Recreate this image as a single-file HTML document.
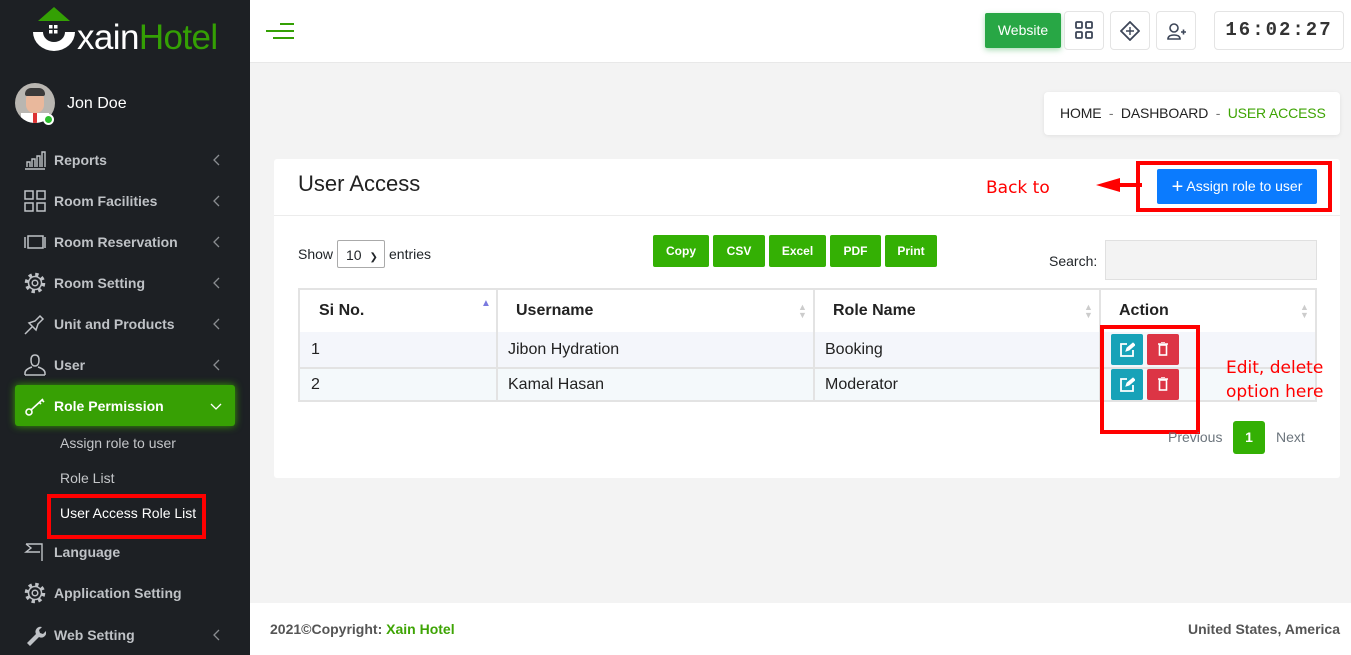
<!DOCTYPE html>
<html><head><meta charset="utf-8">
<style>
*{box-sizing:border-box;margin:0;padding:0}
body{width:1351px;height:655px;overflow:hidden;background:#f3f3f3;font-family:"Liberation Sans",Arial,sans-serif;position:relative;color:#212529}
.a{position:absolute}
#side{left:0;top:0;width:250px;height:655px;background:#1d2024}
.mi{position:absolute;left:0;width:250px;height:30px;color:#bfc2c6;font-weight:bold;font-size:14px}
.mi span{position:absolute;left:54px;top:7px}
.mi svg{position:absolute;left:24px;top:4px}
.mi .ch{position:absolute;left:212px;top:9px;width:8px;height:12px}
.sub{position:absolute;left:60px;color:#c4c6c9;font-size:14px}
.tb{position:absolute;top:11px;width:40px;height:39px;border:1px solid #e4e4e4;border-radius:4px;background:#fff}
.gb{position:absolute;top:235px;height:32px;background:#34b004;color:#fff;font-size:12px;font-weight:bold;border-radius:2px;text-align:center;line-height:32px}
.th{position:absolute;top:301px;font-weight:bold;font-size:16px;color:#222}
.td{position:absolute;font-size:16px;color:#222}
.srt{position:absolute;top:303px;font-size:9px;color:#ccc;line-height:8px}
.red{position:absolute;border:4px solid #f00}
</style></head><body>
<svg width="0" height="0" style="position:absolute"><defs>
<g id="gear" fill="none" stroke="#bfc2c6"><circle cx="11" cy="11" r="8.5" stroke-width="3.5" stroke-dasharray="3.3 3.37"/><circle cx="11" cy="11" r="6.5" stroke-width="1.5"/><circle cx="11" cy="11" r="2.8" stroke-width="1.5"/></g>
<path id="chev" d="M7 1L2 6l5 5" fill="none" stroke="#8a8d91" stroke-width="1.3"/>
</defs></svg>
<div id="side" class="a">
 <svg class="a" style="left:32px;top:7px" width="44" height="46" viewBox="0 0 44 46">
  <polygon points="22,0 6,14 38,14" fill="#34a004"/>
  <path d="M1,25 a21,19 0 0 0 42,0 l-10,0 a11,10 0 0 1 -22,0z" fill="#fff"/>
  <rect x="17" y="18" width="3.5" height="3.5" fill="#fff"/><rect x="22" y="18" width="3.5" height="3.5" fill="#fff"/><rect x="17" y="23" width="3.5" height="3.5" fill="#fff"/><rect x="22" y="23" width="3.5" height="3.5" fill="#fff"/>
 </svg>
 <div class="a" style="left:77px;top:18px;font-size:35px;color:#fff;letter-spacing:-0.6px">xain<span style="color:#34a004">Hotel</span></div>
 <div class="a" style="left:15px;top:83px;width:40px;height:40px;border-radius:50%;background:#b9b6b1;overflow:hidden">
  <div class="a" style="left:11px;top:8px;width:18px;height:22px;border-radius:8px;background:#e9b89c"></div>
  <div class="a" style="left:10px;top:5px;width:20px;height:8px;border-radius:6px 6px 2px 2px;background:#3b3a3a"></div>
  <div class="a" style="left:6px;top:30px;width:28px;height:14px;background:#fff"></div>
  <div class="a" style="left:18px;top:30px;width:4px;height:10px;background:#d33"></div>
 </div>
 <div class="a" style="left:43px;top:114px;width:11px;height:11px;border-radius:50%;background:#2dbd2d;border:2px solid #fff"></div>
 <div class="a" style="left:67px;top:95px;color:#fff;font-size:16px">Jon Doe</div>

 <div class="mi" style="top:145px"><svg width="22" height="22" viewBox="0 0 22 22" fill="none" stroke="#bfc2c6" stroke-width="1.4"><path d="M1 20h20M3 18v-5h3v5M8 18v-8h3v8M13 18v-11h3v11M18 18v-15h3v15"/></svg><span>Reports</span><svg class="ch" viewBox="0 0 8 12"><use href="#chev"/></svg></div>
 <div class="mi" style="top:186px"><svg width="22" height="22" viewBox="0 0 22 22" fill="none" stroke="#bfc2c6" stroke-width="1.5"><rect x="1" y="1" width="8" height="8"/><rect x="13" y="1" width="8" height="8"/><rect x="1" y="13" width="8" height="8"/><rect x="13" y="13" width="8" height="8"/></svg><span>Room Facilities</span><svg class="ch" viewBox="0 0 8 12"><use href="#chev"/></svg></div>
 <div class="mi" style="top:227px"><svg width="22" height="22" viewBox="0 0 22 22" fill="none" stroke="#bfc2c6" stroke-width="1.5"><rect x="4" y="5" width="15" height="12"/><path d="M1 6v11M21 6v11"/></svg><span>Room Reservation</span><svg class="ch" viewBox="0 0 8 12"><use href="#chev"/></svg></div>
 <div class="mi" style="top:268px"><svg width="22" height="22" viewBox="0 0 22 22"><use href="#gear"/></svg><span>Room Setting</span><svg class="ch" viewBox="0 0 8 12"><use href="#chev"/></svg></div>
 <div class="mi" style="top:309px"><svg width="22" height="22" viewBox="0 0 22 22" fill="none" stroke="#bfc2c6" stroke-width="1.5"><path d="M1 21l7-7M5 10l7 7 2-6 5-5-3-3-5 5z"/></svg><span>Unit and Products</span><svg class="ch" viewBox="0 0 8 12"><use href="#chev"/></svg></div>
 <div class="mi" style="top:350px"><svg width="22" height="22" viewBox="0 0 22 22" fill="none" stroke="#bfc2c6" stroke-width="1.5"><path d="M11 1c-3 0-4 2-4 5s1 6 4 6 4-3 4-6-1-5-4-5zM1 21v-2c0-3 4-5 7-6M21 21v-2c0-3-4-5-7-6M1 21h20"/></svg><span>User</span><svg class="ch" viewBox="0 0 8 12"><use href="#chev"/></svg></div>
 <div class="a" style="left:15px;top:385px;width:220px;height:41px;background:#37a004;border-radius:3px;box-shadow:0 0 8px #37a004"></div>
 <div class="mi" style="top:391px;color:#fff"><svg width="22" height="22" viewBox="0 0 22 22" fill="none" stroke="#fff" stroke-width="1.6"><circle cx="5" cy="17" r="3"/><path d="M7 15l12-11M15 7l2 2M18 5l2 2"/></svg><span>Role Permission</span><svg class="ch" style="left:210px;top:12px;width:12px;height:8px" viewBox="0 0 12 8"><path d="M1 1l5 5 5-5" fill="none" stroke="#fff" stroke-width="1.3"/></svg></div>
 <div class="sub" style="top:435px">Assign role to user</div>
 <div class="sub" style="top:470px">Role List</div>
 <div class="sub" style="top:505px;color:#fff">User Access Role List</div>
 <div class="red" style="left:47px;top:494px;width:159px;height:45px"></div>
 <div class="mi" style="top:537px"><svg width="22" height="22" viewBox="0 0 22 22" fill="none" stroke="#bfc2c6" stroke-width="1.4"><path d="M2 3h16v17M2 3l5 4-5 4h14"/></svg><span>Language</span></div>
 <div class="mi" style="top:578px"><svg width="22" height="22" viewBox="0 0 22 22"><use href="#gear"/></svg><span>Application Setting</span></div>
 <div class="mi" style="top:620px"><svg width="22" height="22" viewBox="0 0 22 22"><path d="M3 19l9-9a5 5 0 0 1 6-7l-3 3 1 3 3 1 3-3a5 5 0 0 1-7 6l-9 9z" fill="#bfc2c6"/></svg><span>Web Setting</span><svg class="ch" viewBox="0 0 8 12"><use href="#chev"/></svg></div>
</div>

<div class="a" style="left:250px;top:0;width:1101px;height:63px;background:#fff;border-bottom:1px solid #e8e8e8"></div>
<div class="a" style="left:280px;top:23px;width:14px;height:2px;background:#34a004"></div>
<div class="a" style="left:266px;top:30px;width:28px;height:2px;background:#34a004"></div>
<div class="a" style="left:273px;top:37px;width:21px;height:2px;background:#34a004"></div>
<div class="a" style="left:985px;top:13px;width:76px;height:35px;background:#28a745;border-radius:2px;color:#fff;font-size:14px;text-align:center;line-height:35px;box-shadow:0 2px 6px rgba(40,167,69,.4)">Website</div>
<div class="tb" style="left:1064px"><svg class="a" style="left:10px;top:9px" width="18" height="18" viewBox="0 0 18 18" fill="none" stroke="#3d4658" stroke-width="1.8"><rect x="1" y="1" width="6" height="6" rx="1"/><rect x="11" y="1" width="6" height="6" rx="1"/><rect x="1" y="11" width="6" height="6" rx="1"/><rect x="11" y="11" width="6" height="6" rx="1"/></svg></div>
<div class="tb" style="left:1110px"><svg class="a" style="left:9px;top:9px" width="20" height="20" viewBox="0 0 20 20" fill="none" stroke="#3d4658" stroke-width="1.8"><path d="M10 1l9 9-9 9-9-9z"/><path d="M10 6v8M6 10h8" stroke-width="1.4"/></svg></div>
<div class="tb" style="left:1156px"><svg class="a" style="left:10px;top:10px" width="20" height="20" viewBox="0 0 20 20" fill="none" stroke="#3d4658" stroke-width="1.6"><circle cx="7" cy="6" r="4"/><path d="M1 17c0-3 3-4 6-4s6 1 6 4zM14 10h5M16.5 7.5v5"/></svg></div>
<div class="a" style="left:1214px;top:11px;width:130px;height:39px;border:1px solid #e4e4e4;border-radius:4px;background:#fff;font-family:'Liberation Mono',monospace;font-size:19px;font-weight:bold;color:#333;text-align:center;line-height:37px;letter-spacing:2px">16:02:27</div>

<div class="a" style="left:1044px;top:92px;width:296px;height:43px;background:#fff;border-radius:4px;box-shadow:0 1px 4px rgba(0,0,0,.08);font-size:14px;line-height:43px;padding-left:16px;color:#222;letter-spacing:-0.15px">HOME&nbsp; <span style="color:#777">-</span> &nbsp;DASHBOARD&nbsp; <span style="color:#777">-</span> &nbsp;<span style="color:#3ea404">USER ACCESS</span></div>

<div class="a" style="left:274px;top:159px;width:1066px;height:319px;background:#fff;border-radius:3px"></div>
<div class="a" style="left:274px;top:215px;width:1066px;height:1px;background:#ececec"></div>
<div class="a" style="left:298px;top:171px;font-size:22px;color:#222">User Access</div>
<div class="a" style="left:986px;top:178px;font-size:17px;color:#f00;font-family:'DejaVu Sans',sans-serif">Back to</div>
<svg class="a" style="left:1096px;top:176px" width="46" height="18"><polygon points="0,9 24,2 24,16" fill="#f00"/><rect x="22" y="7" width="24" height="4" fill="#f00"/></svg>
<div class="red" style="left:1136px;top:161px;width:196px;height:51px"></div>
<div class="a" style="left:1157px;top:169px;width:160px;height:35px;background:#0b7bfe;border-radius:2px;color:#fff;font-size:14px;line-height:35px;text-align:center"><span style="font-size:20px;vertical-align:-2px">+</span> Assign role to user</div>

<div class="a" style="left:298px;top:246px;font-size:14px">Show</div>
<div class="a" style="left:337px;top:240px;width:48px;height:28px;border:1px solid #aaa;border-radius:2px;font-size:14px;padding:6px 0 0 8px">10 <span style="font-size:10px;margin-left:4px">&#10095;</span></div>
<div class="a" style="left:389px;top:246px;font-size:14px">entries</div>
<div class="gb" style="left:653px;width:56px">Copy</div>
<div class="gb" style="left:713px;width:52px">CSV</div>
<div class="gb" style="left:769px;width:57px">Excel</div>
<div class="gb" style="left:830px;width:51px">PDF</div>
<div class="gb" style="left:885px;width:52px">Print</div>
<div class="a" style="left:1049px;top:253px;font-size:14px">Search:</div>
<div class="a" style="left:1105px;top:240px;width:212px;height:40px;background:#f3f3f3;border:1px solid #e0e0e0"></div>

<div class="a" style="left:298px;top:288px;width:1019px;height:114px;border:2px solid #e3e3e3"></div>
<div class="a" style="left:300px;top:332px;width:1015px;height:35px;background:#f4f6fb"></div>
<div class="a" style="left:300px;top:367px;width:1015px;height:2px;background:#e3e3e3"></div>
<div class="a" style="left:300px;top:369px;width:1015px;height:31px;background:#f4f9fb"></div>
<div class="a" style="left:496px;top:290px;width:2px;height:110px;background:#e3e3e3"></div>
<div class="a" style="left:813px;top:290px;width:2px;height:110px;background:#e3e3e3"></div>
<div class="a" style="left:1099px;top:290px;width:2px;height:110px;background:#e3e3e3"></div>
<div class="th" style="left:319px;top:302px">Si No.</div>
<div class="th" style="left:516px;top:302px">Username</div>
<div class="th" style="left:833px;top:302px">Role Name</div>
<div class="th" style="left:1119px;top:302px">Action</div>
<div class="srt" style="left:481px;top:300px;color:#7a7adf;font-size:10px">&#9650;</div>
<div class="srt" style="left:798px">&#9650;<br>&#9660;</div>
<div class="srt" style="left:1084px">&#9650;<br>&#9660;</div>
<div class="srt" style="left:1300px">&#9650;<br>&#9660;</div>
<div class="td" style="left:311px;top:341px">1</div>
<div class="td" style="left:508px;top:341px">Jibon Hydration</div>
<div class="td" style="left:825px;top:341px">Booking</div>
<div class="td" style="left:311px;top:376px">2</div>
<div class="td" style="left:508px;top:376px">Kamal Hasan</div>
<div class="td" style="left:825px;top:376px">Moderator</div>

<div class="a" style="left:1111px;top:334px;width:32px;height:31px;background:#17a2b8;border-radius:2px"><svg class="a" style="left:9px;top:8px" width="15" height="15" viewBox="0 0 15 15" fill="none" stroke="#fff" stroke-width="1.8"><path d="M7 2H1v12h12V8"/><path d="M6 9l1-3 6-5 2 2-6 5z" fill="#fff" stroke-width="1"/></svg></div>
<div class="a" style="left:1147px;top:334px;width:32px;height:31px;background:#dc3545;border-radius:2px"><svg class="a" style="left:11px;top:8px" width="10" height="14" viewBox="0 0 10 14" fill="none" stroke="#fff" stroke-width="1.6"><rect x="1.5" y="3" width="7" height="10"/><path d="M0 2h10M3 0h4"/></svg></div>
<div class="a" style="left:1111px;top:369px;width:32px;height:31px;background:#17a2b8;border-radius:2px"><svg class="a" style="left:9px;top:8px" width="15" height="15" viewBox="0 0 15 15" fill="none" stroke="#fff" stroke-width="1.8"><path d="M7 2H1v12h12V8"/><path d="M6 9l1-3 6-5 2 2-6 5z" fill="#fff" stroke-width="1"/></svg></div>
<div class="a" style="left:1147px;top:369px;width:32px;height:31px;background:#dc3545;border-radius:2px"><svg class="a" style="left:11px;top:8px" width="10" height="14" viewBox="0 0 10 14" fill="none" stroke="#fff" stroke-width="1.6"><rect x="1.5" y="3" width="7" height="10"/><path d="M0 2h10M3 0h4"/></svg></div>
<div class="red" style="left:1100px;top:325px;width:100px;height:109px"></div>
<div class="a" style="left:1226px;top:356px;font-size:17px;color:#f00;font-family:'DejaVu Sans',sans-serif;line-height:24px">Edit, delete<br>option here</div>

<div class="a" style="left:1168px;top:429px;font-size:14px;color:#6c757d">Previous</div>
<div class="a" style="left:1233px;top:421px;width:32px;height:33px;background:#34b004;border-radius:3px;color:#fff;font-size:14px;font-weight:bold;text-align:center;line-height:33px">1</div>
<div class="a" style="left:1276px;top:429px;font-size:14px;color:#6c757d">Next</div>

<div class="a" style="left:250px;top:603px;width:1101px;height:52px;background:#fff"></div>
<div class="a" style="left:270px;top:621px;font-size:14px;font-weight:bold;color:#555">2021©Copyright: <span style="color:#3ea404">Xain Hotel</span></div>
<div class="a" style="left:1188px;top:621px;font-size:14px;font-weight:bold;color:#555">United States, America</div>
</body></html>
